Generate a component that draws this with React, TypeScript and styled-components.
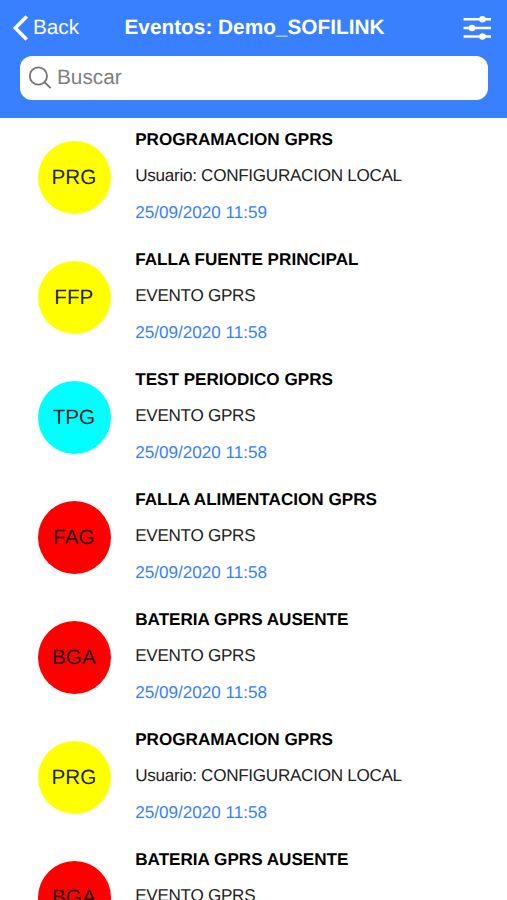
import React from "react";
import styled, { createGlobalStyle } from "styled-components";

const Global = createGlobalStyle`
  *, *::before, *::after { box-sizing: border-box; }
  html, body { margin: 0; overflow: hidden; background: #fff; }
  body { font-family: "Liberation Sans", Arial, sans-serif; color: #000; text-rendering: geometricPrecision; }
`;

const Screen = styled.main`
  width: 507px;
  height: 900px;
  display: flex;
  flex-direction: column;
  overflow: hidden;
  background: #fff;
`;

const Header = styled.header`
  height: 118px;
  flex: none;
  background: #3880ff;
`;

const Toolbar = styled.div`
  height: 55px;
  display: grid;
  grid-template-columns: 90px 1fr 88px;
  align-items: center;
  color: #fff;
`;

const BackButton = styled.button`
  display: flex;
  align-items: center;
  gap: 5px;
  padding: 0 0 0 12px;
  border: 0;
  background: none;
  color: inherit;
  font: 20.7px "Liberation Sans", Arial, sans-serif;
  line-height: 28px;
  text-rendering: inherit;
`;

const Title = styled.h1`
  margin: 0;
  text-align: center;
  white-space: nowrap;
  font-size: 20.8px;
  line-height: 28px;
`;

const FilterButton = styled.button`
  display: flex;
  justify-self: end;
  padding: 0;
  margin-right: 15px;
  border: 0;
  background: none;
  color: inherit;
`;

const SearchBar = styled.label`
  height: 44px;
  margin: 1px 19px 0 20px;
  padding-left: 8px;
  display: flex;
  align-items: center;
  gap: 5px;
  border-radius: 12px;
  background: #fff;
  color: #737373;
`;

const SearchInput = styled.input`
  flex: 1;
  min-width: 0;
  padding: 0;
  border: 0;
  outline: 0;
  background: none;
  font: 20.8px "Liberation Sans", Arial, sans-serif;
  text-rendering: inherit;
  &::placeholder { color: #808080; opacity: 1; }
`;

const EventList = styled.ul`
  margin: 0;
  padding: 0;
  list-style: none;
`;

const EventRow = styled.li`
  height: 120px;
  display: flex;
  padding: 12px 0 0 37.6px;
  gap: 24px;
`;

const Badge = styled.div<{ $color: string }>`
  width: 73.6px;
  height: 73.6px;
  margin-top: 10.8px;
  padding-right: 1px;
  flex: none;
  display: flex;
  align-items: center;
  justify-content: center;
  border-radius: 50%;
  background: ${(p) => p.$color};
  color: rgba(0, 0, 0, 0.9);
  font-size: 20.7px;
`;

const Details = styled.div`
  white-space: nowrap;
`;

const EventName = styled.h2`
  margin: 0;
  font-size: 17.13px;
  line-height: 20px;
`;

const Description = styled.p`
  margin: 16px 0 0;
  font-size: 17.1px;
  letter-spacing: -0.28px;
  line-height: 20px;
  color: #222;
`;

const Timestamp = styled.time`
  display: block;
  margin-top: 17px;
  font-size: 17.13px;
  line-height: 20px;
  color: #3880ff;
`;

const events = [
  { code: "PRG", color: "#ffff00", name: "PROGRAMACION GPRS", detail: "Usuario: CONFIGURACION LOCAL", time: "25/09/2020 11:59" },
  { code: "FFP", color: "#ffff00", name: "FALLA FUENTE PRINCIPAL", detail: "EVENTO GPRS", time: "25/09/2020 11:58" },
  { code: "TPG", color: "#00ffff", name: "TEST PERIODICO GPRS", detail: "EVENTO GPRS", time: "25/09/2020 11:58" },
  { code: "FAG", color: "#ff0000", name: "FALLA ALIMENTACION GPRS", detail: "EVENTO GPRS", time: "25/09/2020 11:58" },
  { code: "BGA", color: "#ff0000", name: "BATERIA GPRS AUSENTE", detail: "EVENTO GPRS", time: "25/09/2020 11:58" },
  { code: "PRG", color: "#ffff00", name: "PROGRAMACION GPRS", detail: "Usuario: CONFIGURACION LOCAL", time: "25/09/2020 11:58" },
  { code: "BGA", color: "#ff0000", name: "BATERIA GPRS AUSENTE", detail: "EVENTO GPRS", time: "25/09/2020 11:58" },
];

const BackIcon = () => (
  <svg width="16" height="28" viewBox="0 0 16 28" fill="none" stroke="currentColor" strokeWidth="3.5" strokeLinecap="square" strokeLinejoin="miter">
    <path d="M13.5 3.8 3.3 14l10.2 10.2" />
  </svg>
);

const SearchIcon = () => (
  <svg width="24" height="24" viewBox="0 0 24 24" fill="none" stroke="currentColor" strokeWidth="1.8" strokeLinecap="square">
    <circle cx="10.4" cy="10" r="8.6" />
    <path d="m16.5 16.2 5.6 5.4" />
  </svg>
);

const FilterIcon = () => (
  <svg width="30" height="26" viewBox="0 0 30 26" fill="currentColor">
    <path d="M1.5 4.3H29M1.5 13H29M1.5 21.5H29" stroke="currentColor" strokeWidth="2.4" />
    <circle cx="20.5" cy="4.3" r="3.3" />
    <circle cx="10" cy="13" r="3.3" />
    <circle cx="20.5" cy="21.5" r="3.3" />
  </svg>
);

export default function App() {
  return (
    <Screen>
      <Global />
      <Header>
        <Toolbar>
          <BackButton><BackIcon />Back</BackButton>
          <Title>Eventos: Demo_SOFILINK</Title>
          <FilterButton aria-label="Filtros"><FilterIcon /></FilterButton>
        </Toolbar>
        <SearchBar><SearchIcon /><SearchInput placeholder="Buscar" /></SearchBar>
      </Header>
      <EventList>
        {events.map((event, i) => (
          <EventRow key={i}>
            <Badge $color={event.color}>{event.code}</Badge>
            <Details>
              <EventName>{event.name}</EventName>
              <Description>{event.detail}</Description>
              <Timestamp>{event.time}</Timestamp>
            </Details>
          </EventRow>
        ))}
      </EventList>
    </Screen>
  );
}
